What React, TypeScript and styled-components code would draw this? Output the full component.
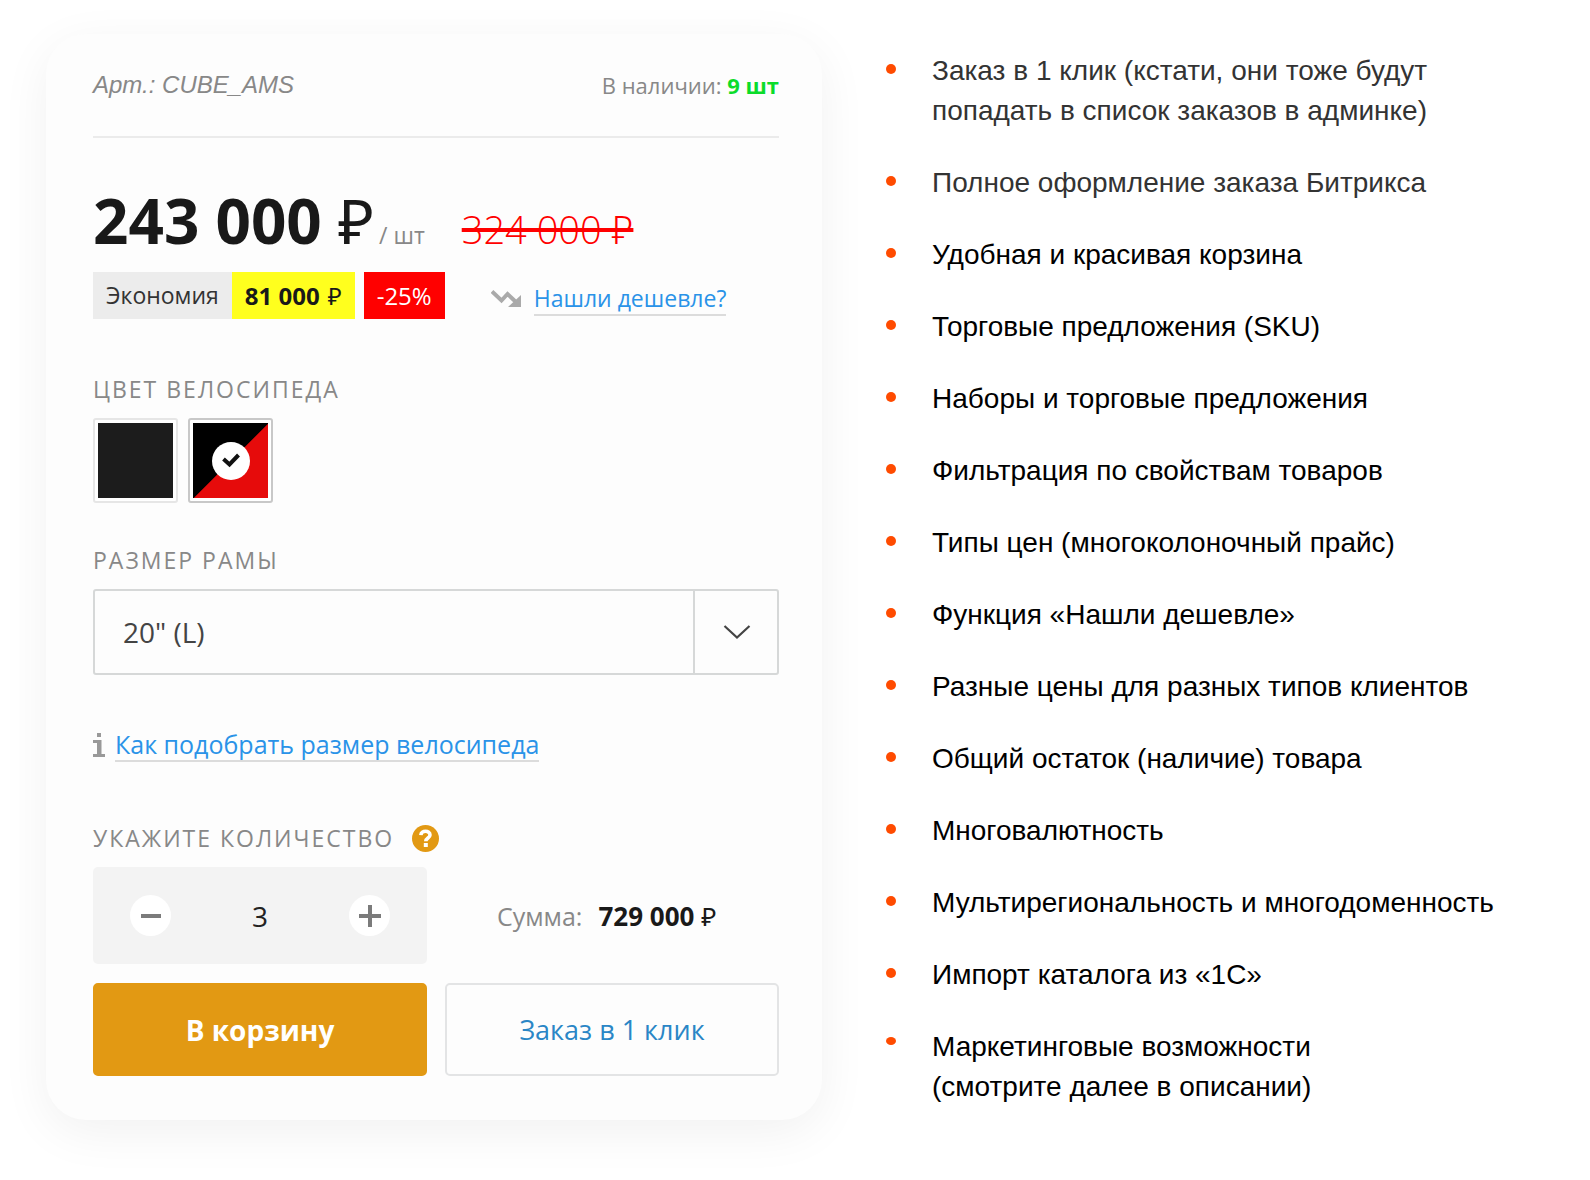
import React, { useState } from "react";
import styled, { createGlobalStyle } from "styled-components";

const ui = `"Open Sans", "Noto Sans", sans-serif`;
const arial = `"Liberation Sans", Arial, sans-serif`;

const GlobalStyle = createGlobalStyle`
  *, *::before, *::after { box-sizing: border-box; }
  body { margin: 0; background: #fff; font-family: ${ui}; }
  button, input, select { font: inherit; color: inherit; }
`;

const Page = styled.main`
  display: grid;
  grid-template-columns: minmax(0, 776fr) minmax(0, 658fr);
  align-items: start;
  column-gap: 64px;
  padding: 34px 46px 60px;
`;

const Card = styled.section`
  padding: 35px 43px 44px 47px;
  border-radius: 40px;
  background: #fdfdfd;
  box-shadow: 0 12px 50px rgba(0, 0, 0, 0.06);
  font-size: 24px;
  line-height: 32px;
  color: #888;
`;

const CardHeader = styled.header`
  display: flex;
  align-items: center;
  justify-content: space-between;
  padding-bottom: 35px;
  border-bottom: 2px solid #ebebeb;
`;

const Article = styled.span`
  font-family: ${arial};
  font-size: 24px;
  font-style: italic;
`;

const Availability = styled.span`
  font-size: 22px;
`;

const Stock = styled.b`
  color: #0bdc2b;
`;

const PriceRow = styled.div`
  display: flex;
  align-items: baseline;
  margin-top: 50px;
`;

const Price = styled.strong`
  font-size: 62px;
  line-height: 64px;
  color: #191919;
`;

const Ruble = styled.span`
  font-weight: 400;
`;

const Unit = styled.span`
  margin-left: 5px;
  font-size: 23px;
`;

const OldPrice = styled.del`
  margin-left: 37px;
  font-size: 38px;
  font-weight: 300;
  color: #f00;
  text-decoration-thickness: 4px;
`;

const SavingRow = styled.div`
  display: flex;
  align-items: center;
  margin-top: 20px;
`;

const Tag = styled.span<{ $bg: string; $fg: string }>`
  padding: 0 13px;
  line-height: 47px;
  background: ${(p) => p.$bg};
  color: ${(p) => p.$fg};
`;

const TagLabel = styled(Tag)`
  font-size: 23px;
`;

const SavingTag = styled(Tag)`
  display: flex;
  gap: 8px;
`;

const DiscountTag = styled(Tag)`
  margin-left: 9px;
`;

const HintRow = styled.div<{ $gap: number }>`
  display: flex;
  align-items: center;
  gap: ${(p) => p.$gap}px;
`;

const CheaperHint = styled(HintRow)`
  margin: 6px 0 0 46px;
  font-size: 23px;
`;

const SizeHint = styled(HintRow)`
  margin-top: 53px;
  font-size: 25px;
`;

const Link = styled.a`
  border-bottom: 2px solid #dcdcdc;
  line-height: 32px;
  color: #2a93e8;
  text-decoration: none;
`;

const Field = styled.fieldset<{ $top: number }>`
  margin: ${(p) => p.$top}px 0 0;
  padding: 0;
  border: 0;
  min-width: 0;
`;

const Caption = styled.div`
  display: flex;
  align-items: center;
  gap: 18px;
  margin-bottom: 13px;
  font-size: 23px;
  letter-spacing: 2px;
  text-transform: uppercase;
`;

const Swatches = styled.div`
  display: flex;
  gap: 10px;
`;

const Swatch = styled.label<{ $fill: string; $active: boolean }>`
  display: grid;
  place-items: center;
  width: 85px;
  height: 85px;
  padding: 3px;
  border: 2px solid ${(p) => (p.$active ? "#c8c8c8" : "#e6e6e6")};
  border-radius: 3px;
  background: ${(p) => p.$fill} content-box, #fff;
  cursor: pointer;
`;

const SwatchInput = styled.input`
  position: absolute;
  opacity: 0;
  margin: 0;
`;

const SelectBox = styled.div`
  position: relative;
  color: #444;
`;

const Select = styled.select`
  appearance: none;
  display: block;
  width: 100%;
  height: 86px;
  padding: 0 100px 0 28px;
  border: 2px solid #d6d8d8;
  border-radius: 3px;
  background: transparent;
  font-size: 28px;
`;

const SelectArrow = styled.span`
  position: absolute;
  inset: 0 0 0 auto;
  display: grid;
  place-items: center;
  width: 86px;
  border-left: 2px solid #d6d8d8;
  pointer-events: none;
`;

const HelpButton = styled.button`
  display: grid;
  padding: 0;
  border: 0;
  background: none;
  cursor: pointer;
`;

const OrderGrid = styled.div`
  display: grid;
  grid-template-columns: 1fr 1fr;
  align-items: center;
  gap: 19px 18px;
`;

const Counter = styled.div`
  display: flex;
  align-items: center;
  justify-content: space-between;
  height: 97px;
  padding: 0 37px;
  border-radius: 5px;
  background: #f3f3f3;
`;

const StepButton = styled.button`
  display: grid;
  place-items: center;
  width: 41px;
  height: 41px;
  padding: 0;
  border: 0;
  border-radius: 50%;
  background: #fff;
  color: #7b7b7b;
  cursor: pointer;
`;

const CountInput = styled.input`
  width: 80px;
  padding: 0;
  border: 0;
  background: none;
  font-size: 28px;
  text-align: center;
  color: #222;
`;

const Total = styled.div`
  display: flex;
  gap: 16px;
  padding-left: 52px;
  font-size: 25px;
`;

const TotalValue = styled.b`
  font-size: 26px;
  color: #191919;
`;

const ActionButton = styled.button<{ $primary?: boolean }>`
  height: 93px;
  border: 2px solid ${(p) => (p.$primary ? "#e29913" : "#e3e4e5")};
  border-radius: 5px;
  background: ${(p) => (p.$primary ? "#e29913" : "transparent")};
  color: ${(p) => (p.$primary ? "#fff" : "#2a86c6")};
  font-size: ${(p) => (p.$primary ? 28 : 27)}px;
  font-weight: ${(p) => (p.$primary ? 700 : 400)};
  cursor: pointer;
`;

const FeatureList = styled.ul`
  display: flex;
  flex-direction: column;
  gap: 32px;
  margin: 17px 0 0;
  padding: 0;
  list-style: none;
  font-family: ${arial};
  font-size: 28px;
  line-height: 40px;
`;

const Feature = styled.li<{ $muted?: boolean }>`
  display: flex;
  gap: 36px;
  color: ${(p) => (p.$muted ? "#333" : "#000")};
`;

const Bullet = styled.span<{ $flat?: boolean }>`
  flex: none;
  width: 10px;
  height: ${(p) => (p.$flat ? 8 : 10)}px;
  margin-top: ${(p) => (p.$flat ? 10 : 13)}px;
  border-radius: 50%;
  background: #ff4b00;
`;

const colours = [
  { name: "Чёрный", fill: "linear-gradient(#1c1c1c, #1c1c1c)" },
  {
    name: "Чёрно-красный",
    fill: "linear-gradient(135deg, #000 50%, #e60b0b calc(50% + 1px))",
  },
];

const features: React.ReactNode[] = [
  <>Заказ в 1 клик (кстати, они тоже будут<br />попадать в список заказов в админке)</>,
  "Полное оформление заказа Битрикса",
  "Удобная и красивая корзина",
  "Торговые предложения (SKU)",
  "Наборы и торговые предложения",
  "Фильтрация по свойствам товаров",
  "Типы цен (многоколоночный прайс)",
  "Функция «Нашли дешевле»",
  "Разные цены для разных типов клиентов",
  "Общий остаток (наличие) товара",
  "Многовалютность",
  "Мультирегиональность и многодоменность",
  "Импорт каталога из «1С»",
  <>Маркетинговые возможности<br />(смотрите далее в описании)</>,
];

const CheckIcon = () => (
  <svg width="38" height="38" viewBox="0 0 38 38" aria-hidden="true">
    <circle cx="19" cy="19" r="19" fill="#fff" />
    <path d="M11.500 17l6 5.500 9-9.500" fill="none" stroke="#111" strokeWidth="4" />
  </svg>
);

const TrendDownIcon = () => (
  <svg width="30" height="18" viewBox="0 0 30 18" aria-hidden="true">
    <path d="M1 1.500l9.500 9 6-6.500L26 13" fill="none" stroke="#aaa" strokeWidth="4" />
    <path d="M30 5v12H17z" fill="#aaa" />
  </svg>
);

const InfoIcon = () => (
  <svg width="12" height="24" viewBox="0 0 12 24" aria-hidden="true">
    <path d="M4 0h4v4H4zM0 7h8.500v14H12v3H0v-3h4V10H0z" fill="#999" />
  </svg>
);

const HelpIcon = () => (
  <svg width="27" height="27" viewBox="0 0 27 27" aria-hidden="true">
    <circle cx="13.500" cy="13.500" r="13.500" fill="#e29913" />
    <path
      d="M8.800 10.200C9.200 5 18 5 18 10c0 3-4.200 3-4.200 6.200"
      fill="none"
      stroke="#fff"
      strokeWidth="3.600"
    />
    <rect x="11.800" y="18" width="4" height="4" fill="#fff" />
  </svg>
);

const formatPrice = (value: number) =>
  String(value).replace(/\B(?=(\d{3})+$)/g, "\u00a0");

export default function App() {
  const [colour, setColour] = useState(1);
  const [count, setCount] = useState(3);
  const price = 243000;

  return (
    <>
      <GlobalStyle />
      <Page>
        <Card>
          <CardHeader>
            <Article>Арт.: CUBE_AMS</Article>
            <Availability>В наличии: <Stock>9 шт</Stock></Availability>
          </CardHeader>

          <PriceRow>
            <Price>{formatPrice(price)} <Ruble>₽</Ruble></Price>
            <Unit>/ шт</Unit>
            <OldPrice>324 000 ₽</OldPrice>
          </PriceRow>

          <SavingRow>
            <TagLabel $bg="#ececec" $fg="#333">Экономия</TagLabel>
            <SavingTag $bg="#ffff1e" $fg="#191919"><b>81 000</b> <Ruble>₽</Ruble></SavingTag>
            <DiscountTag $bg="#f00" $fg="#fff">-25%</DiscountTag>
            <CheaperHint $gap={13}>
              <TrendDownIcon />
              <Link href="#cheaper">Нашли дешевле?</Link>
            </CheaperHint>
          </SavingRow>

          <Field $top={54} aria-labelledby="colour-caption">
            <Caption id="colour-caption">Цвет велосипеда</Caption>
            <Swatches>
              {colours.map((c, i) => (
                <Swatch key={c.name} $fill={c.fill} $active={i === colour}>
                  <SwatchInput
                    type="radio"
                    name="colour"
                    aria-label={c.name}
                    checked={i === colour}
                    onChange={() => setColour(i)}
                  />
                  {i === colour && <CheckIcon />}
                </Swatch>
              ))}
            </Swatches>
          </Field>

          <Field $top={41}>
            <Caption as="label" htmlFor="frame-size">Размер рамы</Caption>
            <SelectBox>
              <Select id="frame-size">
                <option>20" (L)</option>
              </Select>
              <SelectArrow>
                <svg width="28" height="16" viewBox="0 0 28 16" aria-hidden="true">
                  <path d="M1.500 2L14 13.500 26.500 2" fill="none" stroke="#444" strokeWidth="2.200" />
                </svg>
              </SelectArrow>
            </SelectBox>
          </Field>

          <SizeHint $gap={10}>
            <InfoIcon />
            <Link href="#size-guide">Как подобрать размер велосипеда</Link>
          </SizeHint>

          <Field $top={60}>
            <Caption>
              <label htmlFor="count">Укажите количество</label>
              <HelpButton type="button" aria-label="Подсказка"><HelpIcon /></HelpButton>
            </Caption>
            <OrderGrid>
              <Counter>
                <StepButton type="button" aria-label="Меньше" onClick={() => setCount(Math.max(1, count - 1))}>
                  <svg width="22" height="22" viewBox="0 0 22 22" aria-hidden="true">
                    <path d="M1 11h20" stroke="currentColor" strokeWidth="4" />
                  </svg>
                </StepButton>
                <CountInput
                  id="count"
                  inputMode="numeric"
                  value={count}
                  onChange={(e) => setCount(Number(e.target.value.replace(/\D/g, "")) || 1)}
                />
                <StepButton type="button" aria-label="Больше" onClick={() => setCount(count + 1)}>
                  <svg width="22" height="22" viewBox="0 0 22 22" aria-hidden="true">
                    <path d="M0 11h22M11 0v22" stroke="currentColor" strokeWidth="4" />
                  </svg>
                </StepButton>
              </Counter>
              <Total>
                <span>Сумма:</span>
                <TotalValue>{formatPrice(price * count)} <Ruble>₽</Ruble></TotalValue>
              </Total>
              <ActionButton type="button" $primary>В корзину</ActionButton>
              <ActionButton type="button">Заказ в 1 клик</ActionButton>
            </OrderGrid>
          </Field>
        </Card>

        <FeatureList>
          {features.map((text, i) => (
            <Feature key={i} $muted={i < 2}>
              <Bullet $flat={i === features.length - 1} />
              <span>{text}</span>
            </Feature>
          ))}
        </FeatureList>
      </Page>
    </>
  );
}
